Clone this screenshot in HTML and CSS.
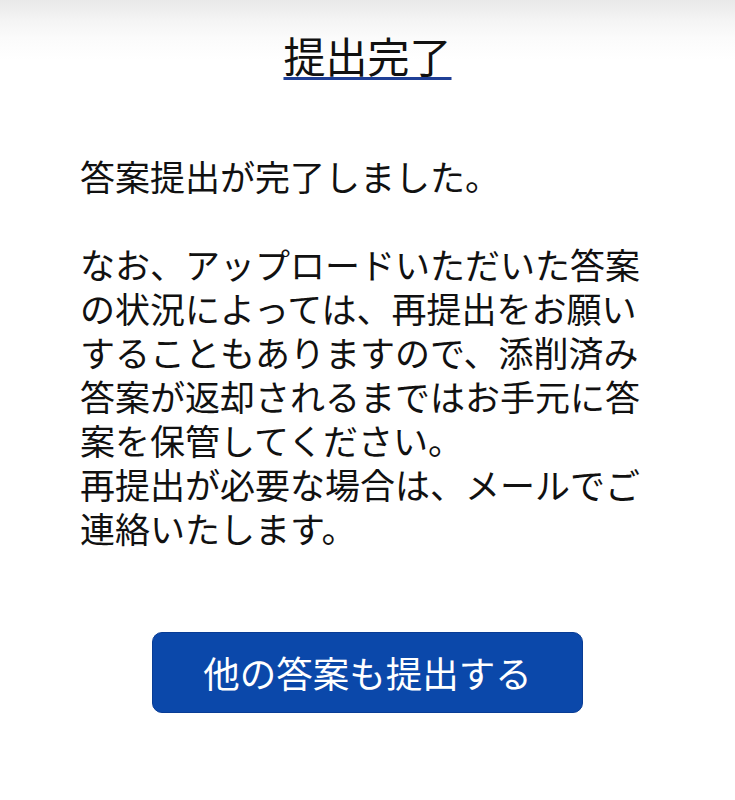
FILE: index.html
```html
<!DOCTYPE html>
<html lang="ja">
<head>
<meta charset="utf-8">
<link rel="stylesheet" href="styles.css">
<title>提出完了</title>
</head>
<body>
<div class="page">
  <header class="head">
    <h1 class="title">提出完了</h1>
  </header>
  <main class="content">
    <p class="lead">答案提出が完了しました。</p>
    <p class="note">なお、アップロードいただいた答案の状況によっては、再提出をお願いすることもありますので、添削済み答案が返却されるまではお手元に答案を保管してください。</p>
    <p class="note">再提出が必要な場合は、メールでご連絡いたします。</p>
  </main>
  <div class="actions">
    <a class="btn" href="#">他の答案も提出する</a>
  </div>
</div>
</body>
</html>
```
FILE: styles.css
```css
html, body {
  margin: 0;
  padding: 0;
}
body {
  background: #ffffff;
  font-family: "Noto Sans CJK JP", "Noto Sans", sans-serif;
  color: #111111;
}
.page {
  min-height: 800px;
  background:
    linear-gradient(to bottom, #e9e9e9 0px, #f4f4f4 20px, #fbfbfb 38px, rgba(255,255,255,0) 60px),
    #ffffff;
}
.head {
  display: flex;
  justify-content: center;
  padding-top: 27px;
}
.title {
  margin: 0;
  font-size: 42px;
  font-weight: 400;
  line-height: 56px;
  color: #111111;
  text-decoration: underline;
  text-decoration-color: #1f3f96;
  text-decoration-thickness: 3px;
  text-underline-offset: 4px;
}
.content {
  padding: 71px 80px 0 80px;
  font-size: 35px;
  line-height: 44px;
}
.content p {
  margin: 0;
}
.lead {
  margin-bottom: 44px !important;
}
.actions {
  display: flex;
  justify-content: center;
  padding-top: 82px;
}
.btn {
  display: flex;
  align-items: center;
  justify-content: center;
  width: 431px;
  height: 81px;
  box-sizing: border-box;
  background: #0b48aa;
  border: 1px solid #083c95;
  border-radius: 10px;
  color: #ffffff;
  font-size: 36.5px;
  text-decoration: none;
}
```
